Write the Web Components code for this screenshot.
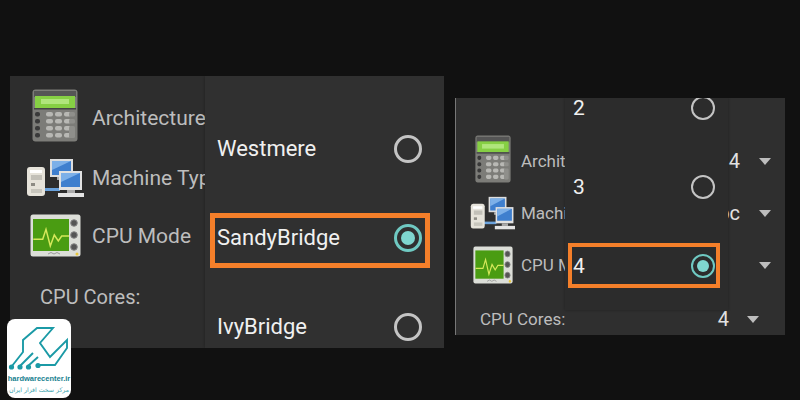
<!DOCTYPE html>
<html><head><meta charset="utf-8">
<style>
html,body{margin:0;padding:0;background:#111;}
body{width:800px;height:400px;overflow:hidden;font-family:Roboto,"Liberation Sans",sans-serif;}
.stage{display:flex;align-items:flex-start;padding:76px 0 0 10px;gap:11px;position:relative;height:324px;box-sizing:border-box;}
</style></head><body>
<template id="t-panel"><style>
:host{display:block;position:relative;overflow:hidden;background:var(--bg,#2f2f2f);width:var(--w);height:var(--h);margin-top:var(--mt,0);box-sizing:border-box;padding-top:var(--pt,0);border-left:var(--edge,none);}
</style><slot></slot><slot name="menu"></slot></template>

<template id="t-row"><style>
:host{display:flex;align-items:center;height:var(--rh,52px);padding-left:var(--pl,0);color:var(--fg,#bdbdbd);font-size:var(--fs,20px);white-space:nowrap;box-sizing:border-box;}
.ic{display:flex;justify-content:center;align-items:center;width:var(--icw,0);margin-right:var(--icg,0);flex:none;}
.lb{flex:1;min-width:0;}
.val{flex:none;color:#e2e2e2;font-size:20px;}
.ar{flex:none;width:0;height:0;border:6px solid transparent;border-top:7px solid #bdbdbd;border-bottom:0;margin-left:var(--arg,19px);margin-right:var(--arr,14px);}
:host(:not([value])) .ar{display:none}
</style><div class="ic"><slot name="icon"></slot></div><div class="lb"><slot></slot></div><div class="val" id="v"></div><div class="ar"></div></template>

<template id="t-menu"><style>
:host{display:block;position:absolute;top:0;left:var(--ml);width:var(--mw);height:var(--mh,100%);background:var(--mbg,#303030);overflow:hidden;font-size:var(--mfs,22px);color:#f0f0f0;box-shadow:0 0 3px rgba(0,0,0,.3);}
.in{margin-top:var(--mtop,0);}
</style><div class="in"><slot></slot></div></template>

<template id="t-item"><style>
:host{display:flex;align-items:center;justify-content:space-between;position:relative;height:var(--ih,89px);padding:0 var(--ipr,22px) 0 var(--ipl,12px);box-sizing:border-box;}
span{display:block;line-height:18px;}
.box{display:none;position:absolute;inset:var(--bt) var(--br) var(--bb) var(--bl);border:var(--bw,5px) solid #f47f2a;}
:host([selected]) .box{display:block}
.r{box-sizing:border-box;width:var(--rs,28px);height:var(--rs,28px);border-radius:50%;border:var(--rb,3px) solid #c4c4c4;display:flex;align-items:center;justify-content:center;flex:none;}
.d{display:none;width:var(--rd,14px);height:var(--rd,14px);border-radius:50%;background:#7fd6cf;}
:host([selected]) .r{border-color:#6fc9c2}
:host([selected]) .d{display:block}
</style><span><slot></slot></span><div class="r"><div class="d"></div></div><div class="box"></div></template>

<template id="t-badge"><style>
:host{display:block;position:absolute;left:7px;top:319px;width:64px;height:79px;background:#fff;border-radius:8px;overflow:hidden;text-align:center;}
svg{display:block;width:64px;height:52px;}
.a{font:700 7.5px/10px "Liberation Sans",Arial,sans-serif;color:#17818f;margin-top:3px;white-space:nowrap;}
.b{font:400 6.2px/11px "DejaVu Sans",sans-serif;color:#3aa3ad;white-space:nowrap;direction:rtl;}
</style><svg viewBox="0 0 64 52" fill="none" stroke="#1b9aa6" stroke-width="1.900" stroke-linejoin="miter"><path d="M5 47 L16 33 V21 L30 9 H46 L33 24 L43 38 L60 21 V29 L48 46 H32"/><path d="M13 47 L26 34"/><path d="M21 47 L31 38"/><g fill="#1b9aa6" stroke="none"><circle cx="4.500" cy="48" r="2.600"/><circle cx="13" cy="48" r="2.600"/><circle cx="21.500" cy="48" r="2.600"/><circle cx="31" cy="46.500" r="2.600"/></g></svg><div class="a">hardwarecenter.ir</div><div class="b">مرکز سخت افزار ایران</div></template>

<div class="stage">
  <cpu-panel style="--w:434px;--h:272px;--pt:10px;--bg:#2d2d2d;--fs:21px;--pl:16px;--icw:58px;--icg:8px">
    <setting-row style="--rh:64px"><hw-icon slot="icon" kind="calc" style="width:46px;height:53px;margin-bottom:5px"></hw-icon>Architecture</setting-row>
    <setting-row style="--rh:56px"><hw-icon slot="icon" kind="machine" style="width:58px;height:41px"></hw-icon>Machine Typ</setting-row>
    <setting-row style="--rh:60px"><hw-icon slot="icon" kind="cpu" style="width:51px;height:43px;margin-bottom:2px"></hw-icon>CPU Mode</setting-row>
    <setting-row style="--rh:62px;--pl:30px;--icw:0;--icg:0;--fs:20px">CPU Cores:</setting-row>
    <choice-menu slot="menu" style="--ml:195px;--mw:239px;--mtop:28px;--mfs:22px">
      <choice-item>Westmere</choice-item>
      <choice-item selected style="--bt:19.500px;--bb:14.500px;--bl:5px;--br:14px">SandyBridge</choice-item>
      <choice-item>IvyBridge</choice-item>
    </choice-menu>
  </cpu-panel>
  <cpu-panel style="--w:330px;--h:237px;--mt:22px;--pt:37px;--bg:#2f2f2f;--edge:1px solid #777;--fs:17px;--pl:14px;--icw:45px;--icg:6px">
    <setting-row value="4"><hw-icon slot="icon" kind="calc" style="width:36px;height:48px;margin-bottom:4px"></hw-icon>Archit</setting-row>
    <setting-row value="oc"><hw-icon slot="icon" kind="machine" style="width:45px;height:35px"></hw-icon>Machi</setting-row>
    <setting-row value=""><hw-icon slot="icon" kind="cpu" style="width:40px;height:38px"></hw-icon>CPU M</setting-row>
    <setting-row value="4" style="--rh:56px;--pl:24px;--icw:0;--icg:0;--arr:26px;--arg:18px">CPU Cores:</setting-row>
    <choice-menu slot="menu" style="--ml:109px;--mw:163px;--mh:212px;--mtop:-30px;--mfs:21px;--mbg:#2c2c2c;--ih:79px;--ipl:8px;--ipr:13px;--rs:24px;--rb:2.500px;--rd:12px">
      <choice-item>2</choice-item>
      <choice-item>3</choice-item>
      <choice-item selected style="--bt:17px;--bb:17px;--bl:3px;--br:8px;--bw:4px">4</choice-item>
    </choice-menu>
  </cpu-panel>
</div>
<logo-badge></logo-badge>
<script>
const ICONS={
calc:`<svg viewBox="0 0 46 53" width="100%" height="100%" preserveAspectRatio="none"><rect x=".5" y=".5" width="45" height="52" rx="3" fill="#7c7c78"/><rect x="2" y="2" width="42" height="6" fill="#555"/><rect x="3" y="7" width="40" height="12" fill="#86cf44"/><rect x="9" y="10" width="28" height="5" fill="#b0e57c"/><rect x="2" y="19" width="42" height="1.500" fill="#444"/>${[0,1,2,3].map(r=>[0,1,2,3].map(c=>`<rect x="${c==0?3:5+c*9}" y="${23+r*7}" width="${c==0?5:7}" height="4.500" rx="2" fill="${c==0?'#3a3a3a':'#b8b8b4'}"/>`).join('')).join('')}<rect x="37" y="23" width="6" height="4.500" rx="1.500" fill="#8f8f8b"/><rect x="37" y="30" width="6" height="4.500" rx="1.500" fill="#8f8f8b"/><rect x="37" y="37" width="6" height="12" rx="1.500" fill="#8f8f8b"/></svg>`,
machine:`<svg viewBox="0 0 58 41" width="100%" height="100%" preserveAspectRatio="none"><path d="M18 30 H34 V33 H18Z" fill="#6aa2dc"/><rect x="1" y="9" width="18" height="29" rx="3" fill="#e6e3da"/><rect x="4" y="12" width="12" height="3" fill="#fff"/><rect x="5" y="17" width="11" height="5" fill="#c2c0b8"/><rect x="5" y="25" width="4" height="3" fill="#8d8b84"/><rect x="5" y="31" width="11" height="4" fill="#c8c6bd"/><rect x="24" y="1" width="23" height="18" fill="#dedede"/><rect x="26" y="3" width="19" height="14" fill="#3f7fce"/><path d="M26 3h19l-19 9z" fill="#7db0e8"/><rect x="31" y="19" width="10" height="3" fill="#aaa"/><rect x="33" y="13" width="23" height="19" fill="#e2e2e2"/><rect x="35" y="15" width="19" height="14" fill="#3f7fce"/><path d="M35 15h19l-19 9z" fill="#7db0e8"/><rect x="41" y="32" width="8" height="3" fill="#aaa"/><rect x="32" y="35" width="26" height="4" fill="#e4e4e4"/></svg>`,
cpu:`<svg viewBox="0 0 51 43" width="100%" height="100%" preserveAspectRatio="none"><rect x=".5" y=".5" width="50" height="42" rx="2.500" fill="#dcded8"/><rect x="3" y="5" width="36" height="32" fill="#4a9c12"/><path d="M3.300 25.300 H12.700 L16 15.300 L20.300 32 L24.300 21 L28.300 27 L31.700 22 H39" fill="none" stroke="#d5e85a" stroke-width="1.500"/><g fill="#555" stroke="#888"><circle cx="44" cy="9" r="3.300"/><circle cx="44" cy="21" r="3.300"/><circle cx="44" cy="33" r="3.300"/></g><circle cx="47" cy="40" r="1.500" fill="#e8c63a"/><path d="M18 40 q3 -3 6 0 q3 -3 6 0" fill="none" stroke="#999"/></svg>`};
function def(name,tpl,extra){customElements.define(name,class extends HTMLElement{constructor(){super();this.attachShadow({mode:'open'}).appendChild(document.getElementById(tpl).content.cloneNode(true));}connectedCallback(){extra&&extra(this);}});}
def('cpu-panel','t-panel');
def('setting-row','t-row',el=>{const v=el.getAttribute('value');if(v)el.shadowRoot.getElementById('v').textContent=v;});
def('choice-menu','t-menu');
def('choice-item','t-item');
def('logo-badge','t-badge');
customElements.define('hw-icon',class extends HTMLElement{constructor(){super();this.attachShadow({mode:'open'});}connectedCallback(){this.shadowRoot.innerHTML=`<style>:host{display:block;flex:none}svg{display:block;filter:blur(.3px)}</style>`+ICONS[this.getAttribute('kind')];}});
</script>
</body></html>
